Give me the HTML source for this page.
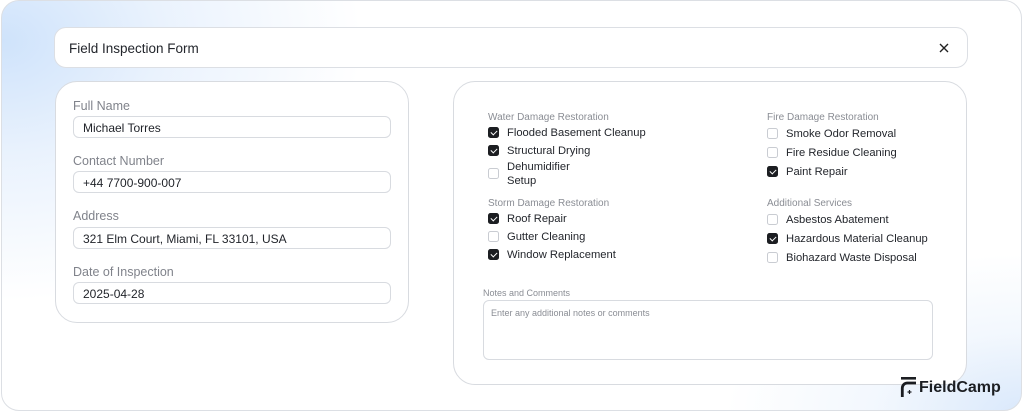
<!DOCTYPE html>
<html><head><meta charset="utf-8"><style>
*{box-sizing:border-box;margin:0;padding:0}
body{width:1024px;height:413px;background:#fff;font-family:"Liberation Sans",sans-serif;position:relative;overflow:hidden;color:#1f2228}
.outer{position:absolute;left:1px;top:0;width:1021px;height:411px;border:1px solid #dcdfe4;border-radius:18px;overflow:hidden;
background:radial-gradient(ellipse 360px 260px at 0 40px,#cfe3fb 0%,rgba(220,234,252,.6) 45%,rgba(255,255,255,0) 100%),radial-gradient(ellipse 300px 160px at 1024px 413px,#d9e8fb 0%,rgba(230,240,252,.5) 50%,rgba(255,255,255,0) 100%),#fff}
.abs{position:absolute}
.hdr{left:54px;top:27px;width:914px;height:41px;border:1px solid #dcdfe4;border-radius:12px;background:#fff}
.hdr span{position:absolute;left:14px;top:13px;font-size:13.5px;color:#23262c}
.card{border:1px solid #d8dbe0;border-radius:22px;background:#fff}
.lbl{font-size:12.5px;color:#80838b;position:absolute;left:73px}
.inp{position:absolute;left:73px;width:318px;height:22px;border:1px solid #d8dbe0;border-radius:6px;font-size:12px;padding:4px 9px;color:#1f2228}
.sh{position:absolute;font-size:10px;color:#8a8d94}
.cb{position:absolute;width:11px;height:11px;border:1px solid #c9ccd2;border-radius:2.5px;background:#fff}
.cb.on{background:#1c1e22;border-color:#1c1e22}
.cb.on:after{content:"";position:absolute;left:3px;top:1px;width:3px;height:5px;border:solid #fff;border-width:0 1.3px 1.3px 0;transform:rotate(45deg)}
.it{position:absolute;font-size:11.2px;color:#23262c;line-height:13.5px}
</style></head><body>
<div class="outer"></div>
<div class="abs hdr"><span>Field Inspection Form</span>
<svg style="position:absolute;left:884px;top:15px" width="10" height="10" viewBox="0 0 10 10"><path d="M1 1L9 9M9 1L1 9" stroke="#222" stroke-width="1.4"/></svg></div>
<div class="abs card" style="left:55px;top:81px;width:354px;height:242px"></div>
<div class="abs card" style="left:453px;top:81px;width:514px;height:304px"></div>
<div class="lbl" style="top:99px">Full Name</div><div class="inp" style="top:116px">Michael Torres</div>
<div class="lbl" style="top:154px">Contact Number</div><div class="inp" style="top:171px">+44 7700-900-007</div>
<div class="lbl" style="top:209px">Address</div><div class="inp" style="top:227px">321 Elm Court, Miami, FL 33101, USA</div>
<div class="lbl" style="top:265px">Date of Inspection</div><div class="inp" style="top:282px">2025-04-28</div>

<div class="sh" style="left:488px;top:112px">Water Damage Restoration</div>
<div class="cb on" style="left:488px;top:127px"></div><div class="it" style="left:507px;top:127px">Flooded Basement Cleanup</div>
<div class="cb on" style="left:488px;top:145px"></div><div class="it" style="left:507px;top:145px">Structural Drying</div>
<div class="cb" style="left:488px;top:168px"></div><div class="it" style="left:507px;top:161px">Dehumidifier<br>Setup</div>
<div class="sh" style="left:488px;top:198px">Storm Damage Restoration</div>
<div class="cb on" style="left:488px;top:213px"></div><div class="it" style="left:507px;top:213px">Roof Repair</div>
<div class="cb" style="left:488px;top:231px"></div><div class="it" style="left:507px;top:231px">Gutter Cleaning</div>
<div class="cb on" style="left:488px;top:249px"></div><div class="it" style="left:507px;top:249px">Window Replacement</div>

<div class="sh" style="left:767px;top:112px">Fire Damage Restoration</div>
<div class="cb" style="left:767px;top:128px"></div><div class="it" style="left:786px;top:128px">Smoke Odor Removal</div>
<div class="cb" style="left:767px;top:147px"></div><div class="it" style="left:786px;top:147px">Fire Residue Cleaning</div>
<div class="cb on" style="left:767px;top:166px"></div><div class="it" style="left:786px;top:166px">Paint Repair</div>
<div class="sh" style="left:767px;top:198px">Additional Services</div>
<div class="cb" style="left:767px;top:214px"></div><div class="it" style="left:786px;top:214px">Asbestos Abatement</div>
<div class="cb on" style="left:767px;top:233px"></div><div class="it" style="left:786px;top:233px">Hazardous Material Cleanup</div>
<div class="cb" style="left:767px;top:252px"></div><div class="it" style="left:786px;top:252px">Biohazard Waste Disposal</div>

<div class="sh" style="left:483px;top:288px;font-size:9px">Notes and Comments</div>
<div class="abs" style="left:483px;top:300px;width:450px;height:60px;border:1px solid #d8dbe0;border-radius:6px;font-size:9px;color:#8a8d94;padding:7px 7px">Enter any additional notes or comments</div>

<svg class="abs" style="left:900px;top:377px" width="17" height="21" viewBox="0 0 17 21"><rect x="1" y="0" width="15" height="2.6" fill="#1c1e22"/><path d="M2.3 20V11a5 5 0 0 1 5-5H16" fill="none" stroke="#1c1e22" stroke-width="2.8"/><path d="M9.5 13v4M7.5 15h4" stroke="#1c1e22" stroke-width="1.2"/></svg>
<div class="abs" style="left:919px;top:379px;font-size:16px;font-weight:bold;color:#1c1e22">FieldCamp</div>
</body></html>
